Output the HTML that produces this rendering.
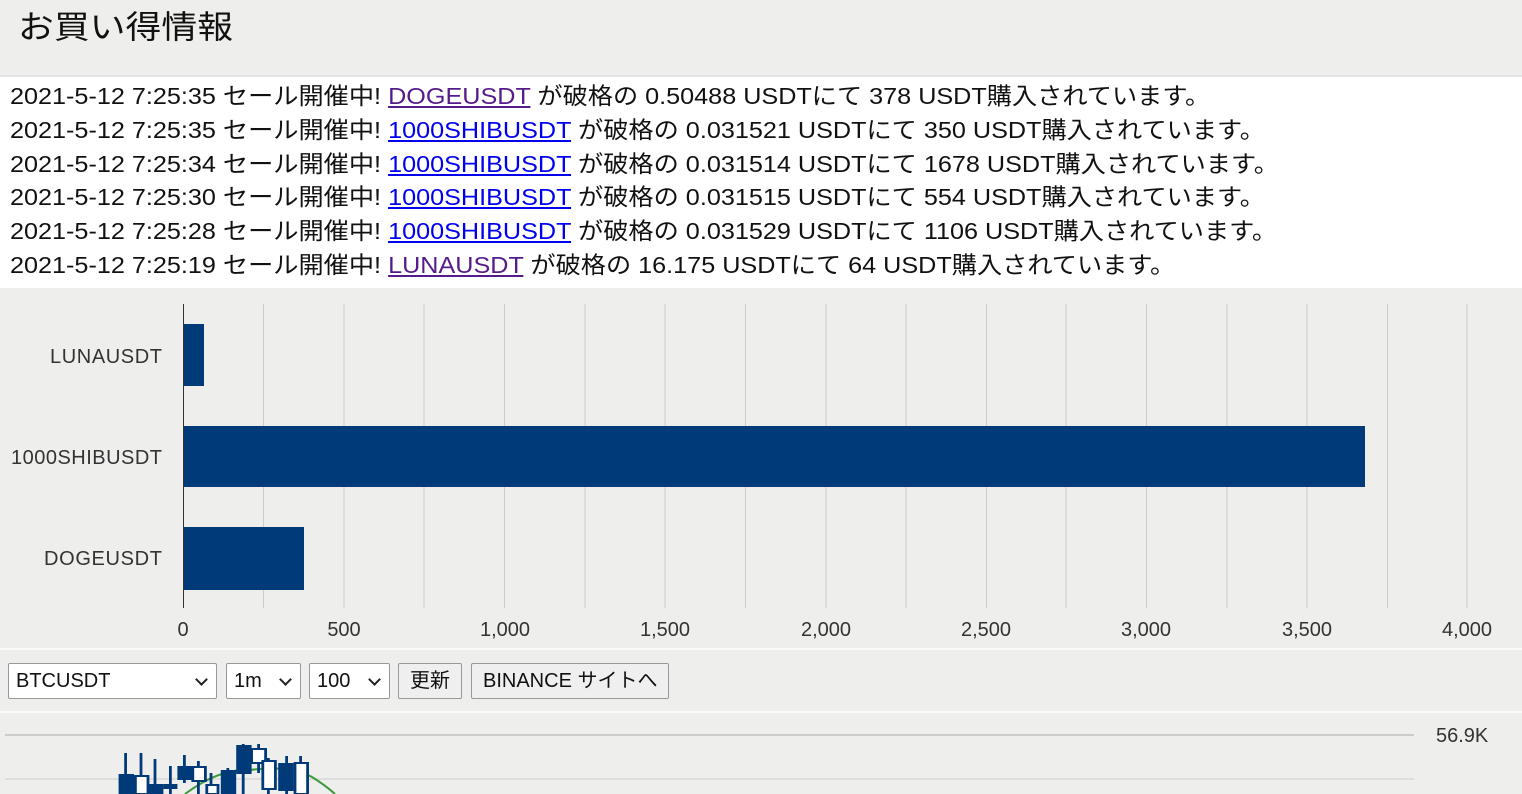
<!DOCTYPE html>
<html><head><meta charset="utf-8"><style>
body{margin:0;width:1522px;height:794px;overflow:hidden;background:#eeeeed;font-family:"Liberation Sans","Noto Sans CJK JP",sans-serif;position:relative}
h1{position:absolute;left:18px;top:2px;margin:0;font-weight:normal;font-size:32px;color:#111;transform:scaleX(1.12);transform-origin:left}
.list{position:absolute;left:0;top:75px;width:1522px;height:213px;background:#fff;border-top:2px solid #e4e4e4;box-sizing:border-box}
.list div{position:absolute;left:10px;font-size:23.5px;color:#111;white-space:nowrap;transform:scaleX(1.072);transform-origin:left}
a{text-decoration:underline}
.v{color:#551a8b}.b{color:#0000ee}
.ctl{position:absolute;top:663px;height:36px;line-height:34px;background:#fff;border:1px solid #999;border-radius:2px;box-sizing:border-box;font-size:20px;padding:0 7px;color:#111;white-space:nowrap}
.btn{background:#efefef}
.sel:after{content:"";position:absolute;right:10px;top:11px;width:7px;height:7px;border-right:2px solid #222;border-bottom:2px solid #222;transform:rotate(45deg)}
</style></head><body>
<h1>お買い得情報</h1>
<div class="list">
<div style="top:0px">2021-5-12 7:25:35 セール開催中! <a class="v">DOGEUSDT</a> が破格の 0.50488 USDTにて 378 USDT購入されています。</div>
<div style="top:34px">2021-5-12 7:25:35 セール開催中! <a class="b">1000SHIBUSDT</a> が破格の 0.031521 USDTにて 350 USDT購入されています。</div>
<div style="top:68px">2021-5-12 7:25:34 セール開催中! <a class="b">1000SHIBUSDT</a> が破格の 0.031514 USDTにて 1678 USDT購入されています。</div>
<div style="top:101px">2021-5-12 7:25:30 セール開催中! <a class="b">1000SHIBUSDT</a> が破格の 0.031515 USDTにて 554 USDT購入されています。</div>
<div style="top:135px">2021-5-12 7:25:28 セール開催中! <a class="b">1000SHIBUSDT</a> が破格の 0.031529 USDTにて 1106 USDT購入されています。</div>
<div style="top:169px">2021-5-12 7:25:19 セール開催中! <a class="v">LUNAUSDT</a> が破格の 16.175 USDTにて 64 USDT購入されています。</div>
</div>
<svg style="position:absolute;left:0;top:288px" width="1522" height="360" font-family="Liberation Sans, sans-serif" font-size="20" fill="#333">
<g stroke="#ccc" stroke-width="1">
<line x1="263.5" y1="16" x2="263.5" y2="320"/><line x1="344" y1="16" x2="344" y2="320"/><line x1="424" y1="16" x2="424" y2="320"/><line x1="504.5" y1="16" x2="504.5" y2="320"/><line x1="585" y1="16" x2="585" y2="320"/><line x1="665" y1="16" x2="665" y2="320"/><line x1="745.5" y1="16" x2="745.5" y2="320"/><line x1="826" y1="16" x2="826" y2="320"/><line x1="906" y1="16" x2="906" y2="320"/><line x1="986.5" y1="16" x2="986.5" y2="320"/><line x1="1066" y1="16" x2="1066" y2="320"/><line x1="1146.5" y1="16" x2="1146.5" y2="320"/><line x1="1227" y1="16" x2="1227" y2="320"/><line x1="1307" y1="16" x2="1307" y2="320"/><line x1="1387.5" y1="16" x2="1387.5" y2="320"/><line x1="1467" y1="16" x2="1467" y2="320"/>
</g>
<rect x="184" y="36" width="20" height="62" fill="#003a78"/>
<rect x="184" y="138" width="1181" height="61" fill="#003a78"/>
<rect x="184" y="239" width="120" height="63" fill="#003a78"/>
<line x1="183.5" y1="16" x2="183.5" y2="320" stroke="#333"/>
<g text-anchor="end"><text x="162" y="75" textLength="112">LUNAUSDT</text><text x="162" y="176" textLength="151">1000SHIBUSDT</text><text x="162" y="277" textLength="118">DOGEUSDT</text></g>
<g text-anchor="middle"><text x="183" y="348">0</text><text x="344" y="348">500</text><text x="505" y="348">1,000</text><text x="665" y="348">1,500</text><text x="826" y="348">2,000</text><text x="986" y="348">2,500</text><text x="1146" y="348">3,000</text><text x="1307" y="348">3,500</text><text x="1467" y="348">4,000</text></g>
</svg>
<div style="position:absolute;left:0;top:648px;width:1522px;height:2px;background:#fafafa"></div>
<div style="position:absolute;left:0;top:711px;width:1522px;height:2px;background:#fafafa"></div>
<div class="ctl sel" style="left:8px;width:209px">BTCUSDT</div>
<div class="ctl sel" style="left:226px;width:75px">1m</div>
<div class="ctl sel" style="left:309px;width:81px">100</div>
<div class="ctl btn" style="left:398px;width:64px;padding-left:11px">更新</div>
<div class="ctl btn" style="left:471px;width:198px;padding-left:11px">BINANCE サイトへ</div>
<svg style="position:absolute;left:0;top:713px" width="1522" height="81" font-family="Liberation Sans, sans-serif" font-size="20" fill="#333">
<line x1="5" y1="22" x2="1414" y2="22" stroke="#ccc" stroke-width="2"/>
<line x1="5" y1="66" x2="1414" y2="66" stroke="#ddd" stroke-width="2"/>
<text x="1436" y="29">56.9K</text>
<path d="M185 81 Q220 55 250 57 Q290 52 312 64 Q325 72 335 81" fill="none" stroke="#3a9a3a" stroke-width="2"/>
<g stroke="#003a78" stroke-width="2" fill="#003a78" transform="translate(-6,0) scale(1.4,1)">
<line x1="94" y1="40" x2="94" y2="81"/><rect x="90" y="62" width="9" height="19"/>
<line x1="105" y1="40" x2="105" y2="81"/><rect x="101" y="63" width="9" height="18" fill="#fff"/>
<line x1="115" y1="46" x2="115" y2="81"/><rect x="111" y="72" width="9" height="9"/>
<line x1="126" y1="53" x2="126" y2="81"/><rect x="122" y="72" width="8" height="3"/>
<line x1="136" y1="42" x2="136" y2="70"/><rect x="132" y="54" width="9" height="12"/>
<line x1="146" y1="48" x2="146" y2="81"/><rect x="142" y="54" width="9" height="14" fill="#fff"/>
<line x1="155" y1="60" x2="155" y2="81"/><rect x="152" y="72" width="8" height="9" fill="#fff"/>
<line x1="167" y1="55" x2="167" y2="81"/><rect x="163" y="58" width="9" height="23"/>
<line x1="178" y1="31" x2="178" y2="81"/><rect x="174" y="33" width="9" height="27"/>
<line x1="189" y1="31" x2="189" y2="60"/><rect x="184" y="36" width="10" height="14" fill="#fff"/>
<line x1="196" y1="45" x2="196" y2="81"/><rect x="192" y="48" width="9" height="28" fill="#fff"/>
<line x1="209" y1="43" x2="209" y2="81"/><rect x="204" y="51" width="9" height="26"/>
<line x1="219" y1="43" x2="219" y2="81"/><rect x="215" y="50" width="9" height="31" fill="#fff"/>
</g>
</svg>
</body></html>
